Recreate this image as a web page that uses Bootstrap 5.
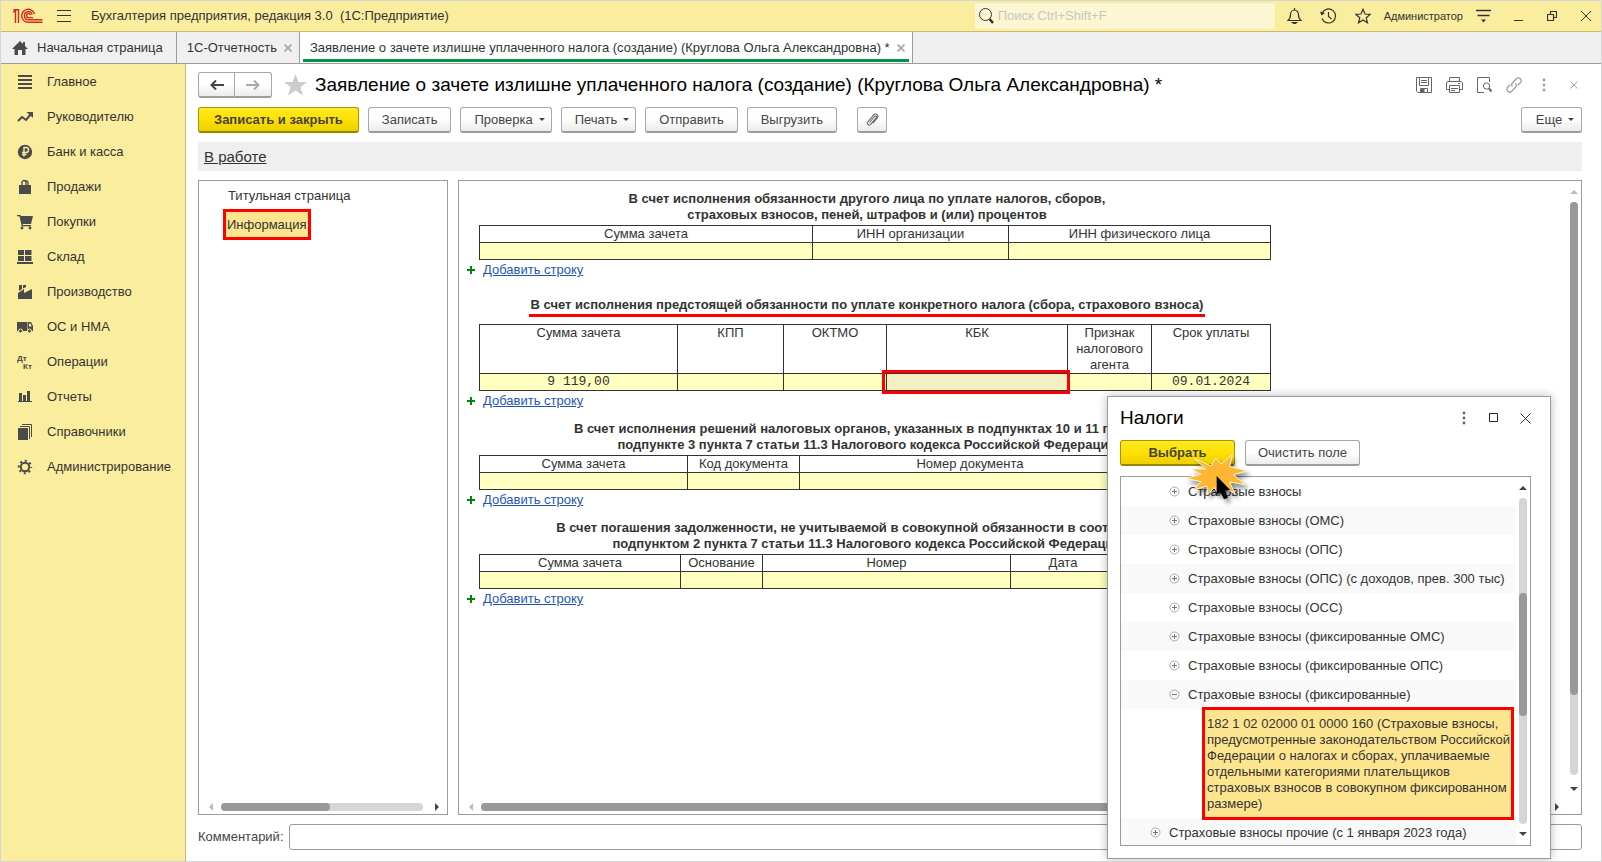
<!DOCTYPE html>
<html lang="ru">
<head>
<meta charset="utf-8">
<meta name="viewport" content="width=device-width, initial-scale=1">
<title>Бухгалтерия предприятия, редакция 3.0</title>
<link href="https://cdn.jsdelivr.net/npm/bootstrap@5.3.0/dist/css/bootstrap.min.css" rel="stylesheet">
<style>
body{font:13px/16px "Liberation Sans",Arial,sans-serif;color:#333;background:#fff}
.app-window{height:100vh;min-height:700px;border:1px solid #d5d5d5;position:relative}
.min-0{min-width:0;min-height:0}
svg{display:block;flex:none}
.icon-btn{border:0;background:none;padding:0;color:inherit;display:flex;align-items:center;justify-content:center}
.titlebar{height:31px;background:#fbed9e;border-bottom:1px solid #c8ba70}
.logo{margin:0 14px 0 12px}
.search-box{width:300px;height:26px;background:#fdf6d3;border-radius:2px}
.search-box input{border:0;background:none;outline:0;width:100%}
.search-box input::placeholder{color:#c9c7bd}
.quick-tools{gap:18px;margin-left:12px}
.win-tools{gap:24px;margin:0 10px 0 23px}
.user-name{font-size:11px;color:#333;margin:0 13px}
.tabstrip{height:32px;background:#f0f0f0;border-bottom:1px solid #9b9b9b}
.tab-item{border-right:1px solid #9b9b9b;color:#333;text-decoration:none;display:flex;align-items:center;gap:7px;padding:0 7px 0 10px}
.tab-home{gap:9px;padding:0 13px 0 11px}
.tab-current{background:#fff;box-shadow:inset 3px 0 #fff,inset -3px 0 #fff,inset 0 -1px #fff,inset 0 -4px #009646}
.tab-item path.cross{stroke:#b0b0b0;stroke-width:2}
.sections{width:185px;background:#fbed9e;border-right:1px solid #c8ba70}
.sections a{height:35px;padding:1px 0 0 16px;gap:14px;color:#333;text-decoration:none;display:flex;align-items:center}
.sections svg{color:#4a4a4a}
.work-area{padding:8px 19px 11px 12px}
.btn-c{height:26px;border:1px solid #a8a8a8;border-bottom:2px solid #9c9c9c;border-radius:3px;background:linear-gradient(#fff 45%,#ececec);color:#444;font:13px/16px "Liberation Sans",Arial,sans-serif;padding:0 13px;display:flex;align-items:center;justify-content:center}
.btn-main{background:linear-gradient(#ffe827,#ffe000 50%,#ecd000);border-color:#a89600;border-bottom-color:#958500;font-weight:bold;padding:0 15px}
.btn-drop{padding-right:6px}
.btn-more{min-width:61px}
.btn-nav{width:37px;padding:0}
.btn-clip{width:30px;padding:0;margin-left:11px}
.cmd-bar{gap:9px;margin:9px 0}
.caret{border:3px solid transparent;border-top:3px solid #444;border-bottom:0;margin-left:6px}
.form-tools{gap:14px;color:#666}
.pale{color:#a0a0a0}
.doc-title{font-size:19px;line-height:24px;color:#000;margin:0;font-weight:normal}
.status-strip{height:29px;background:#efefef;padding-left:6px}
.status-strip a{font-size:15px;color:#333}
.panes{gap:10px;margin:9px 0}
.pane{border:1px solid #9b9b9b}
.nav-pane{width:250px}
.nav-pane a{color:#333;text-decoration:none;margin:7px 0 5px 29px}
.nav-pane a.marked{margin:0 0 0 24px;padding:5px 1px 4px}
.marked{border:3px solid #f00;background:#fde58f}
.sheet{width:792px;margin-left:20px}
.sheet h2{font:bold 13px/16px "Liberation Sans",Arial,sans-serif;width:776px;text-align:center;margin:0;padding:10px 0 2px}
.sheet h2.single{padding:17px 0 11px}
.sheet table{width:792px;table-layout:fixed;border-collapse:collapse}
.sheet th,.sheet td{border:1px solid #333;height:17px;padding:0;font-weight:normal;text-align:center;vertical-align:top}
.sheet tbody td{background:#ffffc0;font-family:"Liberation Mono",monospace}
.sheet td.active-cell{background:#f3f1c4;position:relative}
.active-cell::after{content:"";position:absolute;inset:-4px -3px -4px -5px;border:3px solid #f00}
.add-row{height:20px;margin-left:-12px;display:flex;align-items:center;gap:8px}
.add-row svg{fill:#080}
.add-row a{color:#1f56b3}
.red-line{border-bottom:3px solid #f00;padding:0 2px 2px}
.hscroll{padding:0 8px 0 10px;margin-bottom:3px}
.bar{height:8px;border-radius:4px;background:#d5d5d5}
.bar-v{width:8px;border-radius:4px;background:#d5d5d5}
.thumb{background:#999;border-radius:4px}
.ar{border:4px solid transparent;width:0;height:0}
.ar-l{border-right:4px solid #bbb;border-left:0}
.ar-r{border-left:4px solid #444;border-right:0}
.ar-u{border-bottom:4px solid #bbb;border-top:0}
.ar-d{border-top:4px solid #444;border-bottom:0}
.dark-u{border-bottom-color:#444}
.vscroll{width:14px;margin:9px 0 23px}
.tree-scroll{width:14px;padding:9px 0}
.comment-row{gap:5px;color:#444}
.comment-box{height:26px;border:1px solid #9b9b9b;border-radius:3px}
.dlg{right:50px;bottom:2px;width:444px;background:#fff;border:1px solid #9b9b9b;box-shadow:0 0 9px rgba(0,0,0,.28);padding:0 19px 12px 12px}
.dlg-head{height:42px;gap:21px;padding-right:0}
.dlg-head + div{gap:10px;margin:1px 0 10px}
.dlg .btn-c{width:115px;padding:0}
.tree{border:1px solid #9b9b9b;height:370px}
.tree-row{height:29px;display:flex;align-items:center;padding-left:47px;gap:7px}
.tree-row:nth-child(even){background:#f9f9f9}
.tree-row.top-level{padding-left:28px;background:#f9f9f9}
.tree-leaf{margin:-2px 2px -2px 81px;padding:6px 0 6px 2px;height:113px;position:relative}
.click-mark{left:72px;top:53px;filter:drop-shadow(3px 4px 2px rgba(0,0,0,.45))}
</style>
</head>
<body>
<svg width="0" height="0" class="position-absolute"><defs>
<g id="plus" fill="none"><circle cx="6.500" cy="6.500" r="4.500" stroke="#aaa"/><path stroke="#777" d="M4 6.500h5M6.500 4v5"/></g>
<g id="minus" fill="none"><circle cx="6.500" cy="6.500" r="4.500" stroke="#aaa"/><path stroke="#777" d="M4 6.500h5"/></g>
<path id="add" d="M3 0h2v3h3v2H5v3H3V5H0V3h3z"/>
</defs></svg>
<div class="app-window d-flex flex-column overflow-hidden">
<header class="titlebar d-flex align-items-center flex-shrink-0">
  <svg class="logo" width="30" height="16" viewBox="0 0 30 16" fill="none" stroke="#d8261c" stroke-width="1.400"><path d="M0 4.200 2.500 2.500V15M.5 1.700H5.500V15M29.500 14.300H15.500A6.500 6.500 0 1 1 21.500 6"/><path d="M29.500 11.700H15.500A4 4 0 1 1 19.200 6.500M17.300 7A2 2 0 1 0 15.500 9.600H20"/></svg>
  <button class="icon-btn" aria-label="Меню"><svg width="14" height="14" stroke="#333"><path d="M0 1.500h14M0 6.500h14M0 12.500h14"/></svg></button>
  <span class="ms-3 ps-1">Бухгалтерия предприятия, редакция 3.0&nbsp; (1С:Предприятие)</span>
  <div class="search-box d-flex align-items-center ms-auto px-1"><svg width="15" height="16" viewBox="0 0 15 16" fill="none" stroke="#333"><circle cx="6.500" cy="6.500" r="6"/><path stroke-width="2.500" d="m10.500 11 3.500 4"/></svg><input class="ms-1 p-0" type="search" placeholder="Поиск Ctrl+Shift+F" aria-label="Поиск"></div>
  <div class="quick-tools d-flex align-items-center">
    <button class="icon-btn" aria-label="Уведомления"><svg width="15" height="16" viewBox="0 0 15 16" fill="none" stroke="#333" stroke-width="1.200"><path d="M7.500 0v2M1 12.500h13c-2-1.500-2.500-3-2.500-6a4 4.500 0 0 0-8 0c0 3-.5 4.500-2.500 6z"/><path d="M5.500 14.500h4L7.500 16z" fill="#333"/></svg></button>
    <button class="icon-btn" aria-label="История"><svg width="17" height="16" viewBox="0 0 17 16" fill="none" stroke="#333" stroke-width="1.200"><path d="M2.200 5A7 7 0 1 1 2 10.500M8.500 4v4.500L11.500 11"/><path fill="#333" stroke="none" d="M0 3.500 5 5 1.500 7.500z"/></svg></button>
    <button class="icon-btn" aria-label="Избранное"><svg width="16" height="16" viewBox="0 0 16 16" fill="none" stroke="#333" stroke-width="1.200"><path d="m8 1.200 2 4.800 5.200.4-4 3.400 1.300 5L8 12l-4.500 2.800 1.300-5-4-3.400L6 6z"/></svg></button>
  </div>
  <a href="#" class="user-name text-decoration-none">Администратор</a>
  <button class="icon-btn" aria-label="Сервис"><svg width="15" height="14" viewBox="0 0 15 14"><path stroke="#333" stroke-width="1.300" d="M0 1.500h15M1.500 6.500h12"/><path fill="#333" d="M5 10.500h5L7.500 13.500z"/></svg></button>
  <div class="win-tools d-flex align-items-center">
    <button class="icon-btn" aria-label="Свернуть"><svg width="9" height="12"><path stroke="#333" d="M0 10.500h9"/></svg></button>
    <button class="icon-btn" aria-label="Восстановить"><svg width="10" height="10" fill="none" stroke="#333" stroke-width="1.200"><path d="M.5 3.500h6v6h-6zM3.500 3V.5h6v6H7"/></svg></button>
    <button class="icon-btn" aria-label="Закрыть"><svg width="10" height="10" stroke="#333"><path d="m0 0 10 10M10 0 0 10"/></svg></button>
  </div>
</header>
<nav class="tabstrip d-flex flex-shrink-0">
  <a href="#" class="tab-item tab-home"><svg width="16" height="14" viewBox="0 0 16 14" fill="#4a4a4a"><path d="M8 0 0 8h2.500v6H6V9h4v5h3.500V8H16L13 5V1h-2v2z"/></svg><span>Начальная страница</span></a>
  <a href="#" class="tab-item"><span>1С-Отчетность</span><svg width="8" height="8"><path class="cross" d="m.5.5 7 7m0-7-7 7"/></svg></a>
  <a href="#" class="tab-item tab-current"><span>Заявление о зачете излишне уплаченного налога (создание) (Круглова Ольга Александровна) *</span><svg width="8" height="8"><path class="cross" d="m.5.5 7 7m0-7-7 7"/></svg></a>
</nav>
<div class="d-flex flex-grow-1 min-0">
<nav class="sections flex-shrink-0">
  <a href="#"><svg width="16" height="16"><path stroke="currentColor" stroke-width="2" d="M1 2h14M1 6h14M1 10h14M1 14h14"/></svg>Главное</a>
  <a href="#"><svg width="16" height="16"><path stroke="currentColor" stroke-width="2" fill="none" d="m1 12 4-4 4 3 5-6"/><path fill="currentColor" d="M9.500 3H16v6z"/></svg>Руководителю</a>
  <a href="#"><svg width="16" height="16"><circle cx="8" cy="8" r="7.200" fill="currentColor"/><path fill="none" stroke="#fbed9e" stroke-width="1.400" d="M7 12.500v-9h2a2.500 2.500 0 0 1 0 5H5M5 10.500h4.500"/></svg>Банк и касса</a>
  <a href="#"><svg width="16" height="16"><path fill="currentColor" d="M2 6h12v9H2z"/><path fill="none" stroke="currentColor" stroke-width="1.300" d="M5 7V3.500a2 2 0 0 1 4 0V7M7.500 2.500A2 2 0 0 1 11 3.500V7"/></svg>Продажи</a>
  <a href="#"><svg width="16" height="16" fill="currentColor"><path d="M0 1h3.500l.6 1H16l-2 8H5.500l.3 1H14v1.200H4.700L2.500 2.300H0z"/><circle cx="5" cy="14" r="1.400"/><circle cx="13" cy="14" r="1.400"/></svg>Покупки</a>
  <a href="#"><svg width="16" height="16" fill="currentColor"><path d="M1 1h6v5H1zM8 1h6.500v5H8zM1 7h6v5H1zM8 7h6.500v5H8zM0 13h16v2H0z"/></svg>Склад</a>
  <a href="#"><svg width="16" height="16" fill="currentColor"><path d="M1 15V9l6-4v4l8-4v10zM2 1h3v4L2 7zM6 1h3v2L6 4.500z"/></svg>Производство</a>
  <a href="#"><svg width="16" height="16"><path fill="currentColor" d="M0 3h10v9H0zM10.500 3H14l2 4v5h-5.500z"/><path fill="#fbed9e" d="M12 4.500h1.500l1.200 3H12z"/><g fill="currentColor" stroke="#fbed9e"><circle cx="3.500" cy="12" r="2"/><circle cx="12.500" cy="12" r="2"/></g></svg>ОС и НМА</a>
  <a href="#"><svg width="16" height="16" fill="currentColor" font-size="8" font-weight="bold"><text x="0" y="7">Дт</text><text x="6" y="15">Кт</text></svg>Операции</a>
  <a href="#"><svg width="16" height="16" fill="currentColor"><path d="M2 4h3v8H2zM6 6h3v6H6zM10 2h3v10h-3zM1 12h14v1H1z"/></svg>Отчеты</a>
  <a href="#"><svg width="16" height="16"><path fill="currentColor" d="M1 4h10v12H1z"/><path fill="none" stroke="currentColor" d="M3 2.500h9.500V15M5 .5h9.500V13"/></svg>Справочники</a>
  <a href="#"><svg width="16" height="16" fill="none" stroke="currentColor"><circle cx="8" cy="8" r="4.200" stroke-width="2"/><circle cx="8" cy="8" r="6.200" stroke-width="2" stroke-dasharray="2 2.870" stroke-dashoffset="1"/></svg>Администрирование</a>
</nav>
<main class="work-area d-flex flex-column flex-grow-1 min-0">
  <div class="d-flex align-items-center">
    <div class="btn-group">
      <button class="btn-c btn-nav rounded-end-0" aria-label="Назад"><svg width="14" height="10"><path stroke="#444" stroke-width="2" fill="none" d="M14 5H2M6 .5 1.500 5 6 9.500"/></svg></button>
      <button class="btn-c btn-nav rounded-start-0 border-start-0" aria-label="Вперед"><svg width="14" height="10"><path stroke="#aaa" stroke-width="2" fill="none" d="M0 5h12M8 .5 12.500 5 8 9.500"/></svg></button>
    </div>
    <button class="icon-btn ms-2 ps-1" aria-label="В избранное"><svg width="23" height="22" viewBox="0 0 23 22" fill="#ccc"><path d="m11.500 0 3 8H23l-6.500 5 2.500 8.500-7.500-5-7.500 5L6.500 13 0 8h8.500z"/></svg></button>
    <h1 class="doc-title ms-2">Заявление о зачете излишне уплаченного налога (создание) (Круглова Ольга Александровна) *</h1>
    <div class="form-tools d-flex align-items-center ms-auto">
      <button class="icon-btn" aria-label="Сохранить"><svg width="16" height="16" fill="none" stroke="currentColor"><path d="M.5.500h15v15H2l-1.500-1.500zM3.500.5v8h9v-8M5 3.500h6M5 5.500h6M4.500 15.500v-4h7v4"/><path fill="currentColor" d="M5 12h3v3H5z"/></svg></button>
      <button class="icon-btn" aria-label="Печать"><svg width="17" height="16" fill="none" stroke="currentColor"><path d="M3.500 4V.5h10V4M3.500 12.500H.5V6l1-1.500h14l1 1.500v6.500h-3M3.500 8.500h10v7h-10zM5 11.500h7M5 13.500h4M12 6.500h2"/></svg></button>
      <button class="icon-btn" aria-label="Просмотр"><svg width="15" height="16" fill="none" stroke="currentColor"><path d="M7 15.500H.5V.5h12V5"/><circle cx="9.500" cy="9" r="3.200"/><path stroke-width="2" d="m12 11.500 2.500 3"/></svg></button>
      <button class="icon-btn pale" aria-label="Ссылка"><svg width="16" height="16" viewBox="0 0 16 16" fill="none" stroke="currentColor" stroke-width="1.300"><path d="M6.500 9.500a2.800 2.800 0 0 1 0-3.800l3.800-4a2.800 2.800 0 0 1 4 4l-2.500 2.500M9.500 6.500a2.800 2.800 0 0 1 0 3.800l-3.800 4a2.800 2.800 0 0 1-4-4l2.500-2.500"/></svg></button>
      <button class="icon-btn px-1 pale" aria-label="Ещё"><svg width="8" height="14" fill="currentColor"><circle cx="4" cy="2" r="1.400"/><circle cx="4" cy="7" r="1.400"/><circle cx="4" cy="12" r="1.400"/></svg></button>
      <button class="icon-btn px-1 pale" aria-label="Закрыть форму"><svg width="8" height="8" stroke="currentColor"><path d="m.5.500 7 7m0-7-7 7"/></svg></button>
    </div>
  </div>
  <div class="cmd-bar d-flex">
    <button class="btn-c btn-main">Записать и закрыть</button>
    <button class="btn-c">Записать</button>
    <button class="btn-c btn-drop">Проверка<span class="caret"></span></button>
    <button class="btn-c btn-drop">Печать<span class="caret"></span></button>
    <button class="btn-c">Отправить</button>
    <button class="btn-c">Выгрузить</button>
    <button class="btn-c btn-clip" aria-label="Файлы"><svg width="13" height="14" viewBox="0 0 13 14" fill="none" stroke="#666" stroke-width="1.100"><path d="m3.500 9.500 5-6c1.200-1.200 2.700 0 1.700 1.300l-5.500 6.500c-1.800 1.700-4.300-.3-3-2.300l6-7.200c2-2 5.300.2 3.700 2.800l-4.500 5.500"/></svg></button>
    <button class="btn-c btn-drop btn-more ms-auto">Еще<span class="caret"></span></button>
  </div>
  <div class="status-strip d-flex align-items-center flex-shrink-0"><a href="#">В работе</a></div>
  <div class="panes d-flex flex-grow-1 min-0">
    <section class="pane nav-pane d-flex flex-column flex-shrink-0">
      <a href="#">Титульная страница</a>
      <a href="#" class="marked align-self-start">Информация</a>
      <div class="hscroll d-flex align-items-center mt-auto"><span class="ar ar-l"></span><div class="bar flex-grow-1 mx-2"><div class="thumb h-100" style="width:54%"></div></div><span class="ar ar-r ms-1"></span></div>
    </section>
    <section class="pane d-flex flex-grow-1 min-0">
      <div class="d-flex flex-column flex-grow-1 min-0">
      <div class="sheet">
        <h2>В счет исполнения обязанности другого лица по уплате налогов, сборов,<br>страховых взносов, пеней, штрафов и (или) процентов</h2>
        <table><colgroup><col width="333"><col width="196"><col></colgroup>
          <thead><tr><th>Сумма зачета</th><th>ИНН организации</th><th>ИНН физического лица</th></tr></thead><tbody><tr><td></td><td></td><td></td></tr></tbody></table>
        <div class="add-row"><svg width="8" height="8"><use href="#add"/></svg><a href="#">Добавить строку</a></div>
        <h2 class="single"><span class="red-line">В счет исполнения предстоящей обязанности по уплате конкретного налога (сбора, страхового взноса)</span></h2>
        <table><colgroup><col width="198"><col width="106"><col width="103"><col width="181"><col width="84"><col></colgroup>
          <thead><tr><th>Сумма зачета</th><th>КПП</th><th>ОКТМО</th><th>КБК</th><th>Признак<br>налогового<br>агента</th><th>Срок уплаты</th></tr></thead><tbody><tr><td>9 119,00</td><td></td><td></td><td class="active-cell"></td><td></td><td>09.01.2024</td></tr></tbody></table>
        <div class="add-row"><svg width="8" height="8"><use href="#add"/></svg><a href="#">Добавить строку</a></div>
        <h2>В счет исполнения решений налоговых органов, указанных в подпунктах 10 и 11 пункта 5,<br>подпункте 3 пункта 7 статьи 11.3 Налогового кодекса Российской Федерации</h2>
        <table><colgroup><col width="208"><col width="112"><col width="341"><col></colgroup>
          <thead><tr><th>Сумма зачета</th><th>Код документа</th><th>Номер документа</th><th></th></tr></thead><tbody><tr><td></td><td></td><td></td><td></td></tr></tbody></table>
        <div class="add-row"><svg width="8" height="8"><use href="#add"/></svg><a href="#">Добавить строку</a></div>
        <h2>В счет погашения задолженности, не учитываемой в совокупной обязанности в соответствии с<br>подпунктом 2 пункта 7 статьи 11.3 Налогового кодекса Российской Федерации</h2>
        <table><colgroup><col width="201"><col width="82"><col width="248"><col width="105"><col></colgroup>
          <thead><tr><th>Сумма зачета</th><th>Основание</th><th>Номер</th><th>Дата</th><th></th></tr></thead><tbody><tr><td></td><td></td><td></td><td></td><td></td></tr></tbody></table>
        <div class="add-row"><svg width="8" height="8"><use href="#add"/></svg><a href="#">Добавить строку</a></div>
      </div>
      <div class="hscroll d-flex align-items-center mt-auto"><span class="ar ar-l"></span><div class="bar flex-grow-1 mx-2"><div class="thumb h-100" style="width:75%"></div></div><span class="ar ar-r ms-1"></span></div>
      </div>
      <div class="vscroll d-flex flex-column align-items-center"><span class="ar ar-u mb-2"></span><div class="bar-v flex-grow-1 mb-1"><div class="thumb w-100" style="height:86%"></div></div><span class="ar ar-d mt-2"></span></div>
    </section>
  </div>
  <div class="comment-row d-flex align-items-center"><label for="comment">Комментарий:</label><input id="comment" class="comment-box flex-grow-1" type="text"></div>
</main>
</div>
<section class="dlg position-absolute" role="dialog" aria-labelledby="dlg-title">
  <div class="dlg-head d-flex align-items-center"><h2 id="dlg-title" class="doc-title me-auto">Налоги</h2>
    <button class="icon-btn" aria-label="Ещё"><svg width="8" height="14" fill="#666"><circle cx="4" cy="2" r="1.400"/><circle cx="4" cy="7" r="1.400"/><circle cx="4" cy="12" r="1.400"/></svg></button>
    <button class="icon-btn" aria-label="Развернуть"><svg width="10" height="10"><path fill="none" stroke="#222" d="M.5.500h8v8h-8z"/></svg></button>
    <button class="icon-btn me-n1" aria-label="Закрыть"><svg width="11" height="11" stroke="#333"><path d="m.5.500 10 10m0-10-10 10"/></svg></button></div>
  <div class="d-flex"><button class="btn-c btn-main">Выбрать</button><button class="btn-c">Очистить поле</button></div>
  <div class="tree d-flex overflow-hidden">
    <div class="flex-grow-1">
      <div class="tree-row"><svg width="13" height="13"><use href="#plus"/></svg>Страховые взносы</div>
      <div class="tree-row"><svg width="13" height="13"><use href="#plus"/></svg>Страховые взносы (ОМС)</div>
      <div class="tree-row"><svg width="13" height="13"><use href="#plus"/></svg>Страховые взносы (ОПС)</div>
      <div class="tree-row"><svg width="13" height="13"><use href="#plus"/></svg>Страховые взносы (ОПС) (с доходов, прев. 300 тыс)</div>
      <div class="tree-row"><svg width="13" height="13"><use href="#plus"/></svg>Страховые взносы (ОСС)</div>
      <div class="tree-row"><svg width="13" height="13"><use href="#plus"/></svg>Страховые взносы (фиксированные ОМС)</div>
      <div class="tree-row"><svg width="13" height="13"><use href="#plus"/></svg>Страховые взносы (фиксированные ОПС)</div>
      <div class="tree-row"><svg width="13" height="13"><use href="#minus"/></svg>Страховые взносы (фиксированные)</div>
      <div class="tree-leaf marked">182 1 02 02000 01 0000 160 (Страховые взносы,<br>предусмотренные законодательством Российской<br>Федерации о налогах и сборах, уплачиваемые<br>отдельными категориями плательщиков<br>страховых взносов в совокупном фиксированном<br>размере)</div>
      <div class="tree-row top-level"><svg width="13" height="13"><use href="#plus"/></svg>Страховые взносы прочие (с 1 января 2023 года)</div>
    </div>
    <div class="tree-scroll d-flex flex-column align-items-center flex-shrink-0"><span class="ar ar-u dark-u mb-2"></span><div class="bar-v flex-grow-1 d-flex flex-column"><div style="height:29%"></div><div class="thumb" style="height:38%"></div></div><span class="ar ar-d mt-2"></span></div>
  </div>
  <svg class="click-mark position-absolute" width="80" height="60" viewBox="240 180 240 180"><path d="m258 265 45-12-28-16 42 0-34-32 50 23 14-24 16 18 34-28-8 36 52 12-40 12 34 30-46-8 16 36-34-22-16 22-12-20-20 22-2-26-40 12 22-25z" fill="#ffb733" stroke="#fff3cf" stroke-width="3"/><path d="M350 258v58l12-10 10 22 12-5-10-22h17z"/></svg>
</section>
</div>
<script src="https://cdn.jsdelivr.net/npm/bootstrap@5.3.0/dist/js/bootstrap.bundle.min.js"></script>
</body>
</html>
